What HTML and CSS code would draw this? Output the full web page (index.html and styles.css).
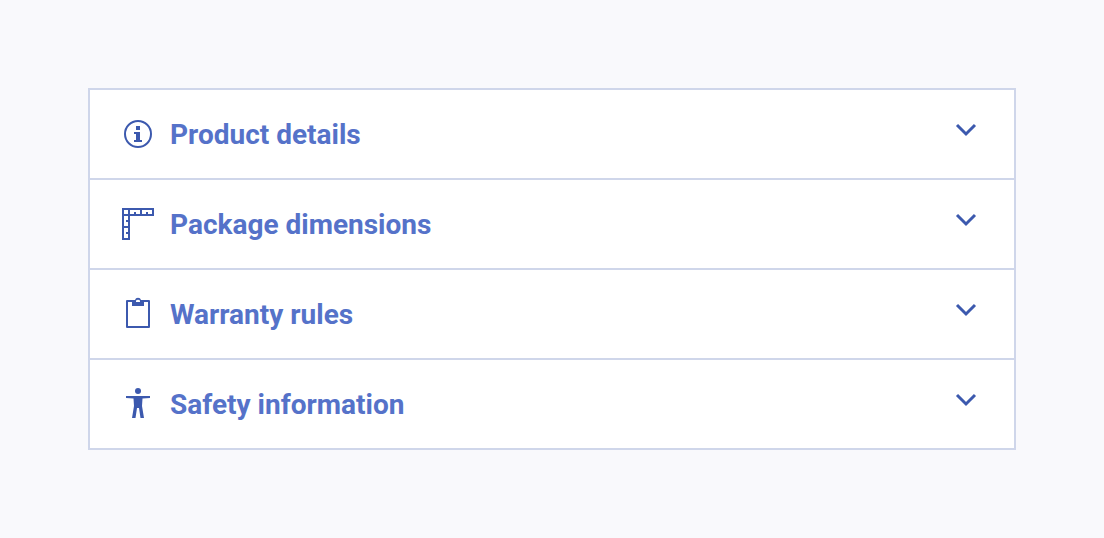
FILE: index.html
```html
<!DOCTYPE html>
<html lang="en">
<head>
<meta charset="utf-8">
<meta name="viewport" content="width=device-width, initial-scale=1">
<title>Product information</title>
<link rel="stylesheet" href="styles.css">
</head>
<body>
<main class="accordion">
  <h2 class="item">
    <button class="toggle" type="button" aria-expanded="false">
      <svg class="icon" viewBox="0 0 32 32" aria-hidden="true">
        <circle cx="16" cy="16" r="13" fill="none" stroke="currentColor" stroke-width="2"/>
        <path d="M14 8h4v4h-4zM12 14h6v8h2v2h-8v-2h2v-6h-2z"/>
      </svg>
      <span class="label">Product details</span>
      <svg class="chevron" viewBox="0 0 24 24" aria-hidden="true"><path d="M3 7l9 9 9-9"/></svg>
    </button>
  </h2>
  <h2 class="item">
    <button class="toggle" type="button" aria-expanded="false">
      <svg class="icon" viewBox="0 0 32 32" aria-hidden="true">
        <path fill-rule="evenodd" d="M0 0h32v8H8v24H0zM2 2v4h4V2zM8 2v4h4V4h2v2h4V2zM20 2v4h4V4h2v2h4V2zM2 8v10h4v-4H4v-2h2V8zM2 20v10h4v-4H4v-2h2v-4z"/>
      </svg>
      <span class="label">Package dimensions</span>
      <svg class="chevron" viewBox="0 0 24 24" aria-hidden="true"><path d="M3 7l9 9 9-9"/></svg>
    </button>
  </h2>
  <h2 class="item">
    <button class="toggle" type="button" aria-expanded="false">
      <svg class="icon" viewBox="0 0 32 32" aria-hidden="true">
        <path fill-rule="evenodd" d="M5 2h8a3.100 3.100 0 0 1 6 0h8a1 1 0 0 1 1 1v26a1 1 0 0 1-1 1H5a1 1 0 0 1-1-1V3a1 1 0 0 1 1-1zM6 4v24h20V4h-4v4H10V4zM14 4h4V3a2 1.300 0 0 0-4 0z"/>
      </svg>
      <span class="label">Warranty rules</span>
      <svg class="chevron" viewBox="0 0 24 24" aria-hidden="true"><path d="M3 7l9 9 9-9"/></svg>
    </button>
  </h2>
  <h2 class="item">
    <button class="toggle" type="button" aria-expanded="false">
      <svg class="icon" viewBox="0 0 32 32" aria-hidden="true">
        <circle cx="16" cy="3" r="3"/>
        <path d="M4 8h24v2l-7.500.500-.500 7.500 2 12h-3.500L17 20h-2l-1.500 10H10l2-12-.500-7.500L4 10z"/>
      </svg>
      <span class="label">Safety information</span>
      <svg class="chevron" viewBox="0 0 24 24" aria-hidden="true"><path d="M3 7l9 9 9-9"/></svg>
    </button>
  </h2>
</main>
</body>
</html>
```
FILE: styles.css
```css
* {
  box-sizing: border-box;
}

body {
  margin: 0;
  padding: 88px;
  background: #f9f9fc;
  font-family: Roboto, sans-serif;
}

.accordion {
  background: #fff;
  border: 2px solid #cfd6ea;
}

.item {
  margin: 0;
  font-size: 28px;
  line-height: 32px;
}

.item + .item {
  border-top: 2px solid #cfd6ea;
}

.toggle {
  display: flex;
  align-items: center;
  gap: 16px;
  width: 100%;
  padding: 27px 36px 27px 32px;
  border: 0;
  background: none;
  color: #5572c9;
  font: inherit;
  font-weight: 700;
  text-align: left;
  cursor: pointer;
}

.icon {
  flex: none;
  width: 32px;
  height: 32px;
  overflow: visible;
  color: #3c59ae;
  fill: currentColor;
}

.label {
  flex: 1;
  padding-top: 2px;
}

.chevron {
  flex: none;
  align-self: flex-start;
  width: 24px;
  height: 24px;
  margin-top: 1px;
  fill: none;
  stroke: #3c59ae;
  stroke-width: 3;
}
```
